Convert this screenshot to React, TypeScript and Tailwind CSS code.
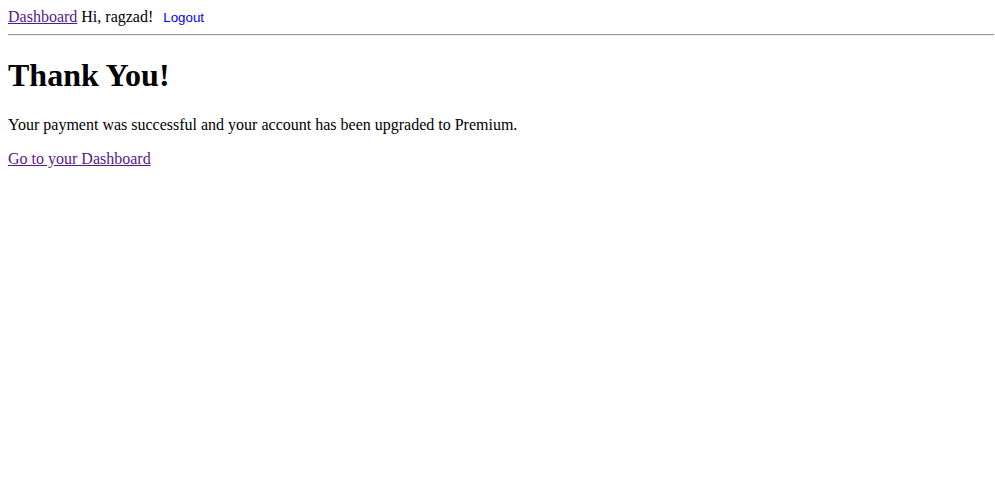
import * as React from 'react';

export default function App() {
  return (
    <div className="m-2 bg-white text-black text-base" style={{ fontFamily: '"Liberation Serif", serif' }}>
      <div className="h-[18px] leading-[18px]">
        <a href="#" className="text-[#551a8b] underline">Dashboard</a>
        {' '}Hi, ragzad!{' '}
        <button className="px-[6px] py-0 leading-[15px] text-[13.33px] text-[#0000ee] bg-transparent" style={{ fontFamily: '"Liberation Sans", sans-serif' }}>
          Logout
        </button>
      </div>
      <hr className="my-2 -mr-[7px] border-t border-t-[#9a9a9a] border-b border-b-[#eeeeee]" />
      <h1 className="my-[21.44px] text-[32px] font-bold leading-[37px]">Thank You!</h1>
      <p className="my-4 leading-[18px]">Your payment was successful and your account has been upgraded to Premium.</p>
      <p className="my-4 leading-[18px]">
        <a href="#" className="text-[#551a8b] underline">Go to your Dashboard</a>
      </p>
    </div>
  );
}
